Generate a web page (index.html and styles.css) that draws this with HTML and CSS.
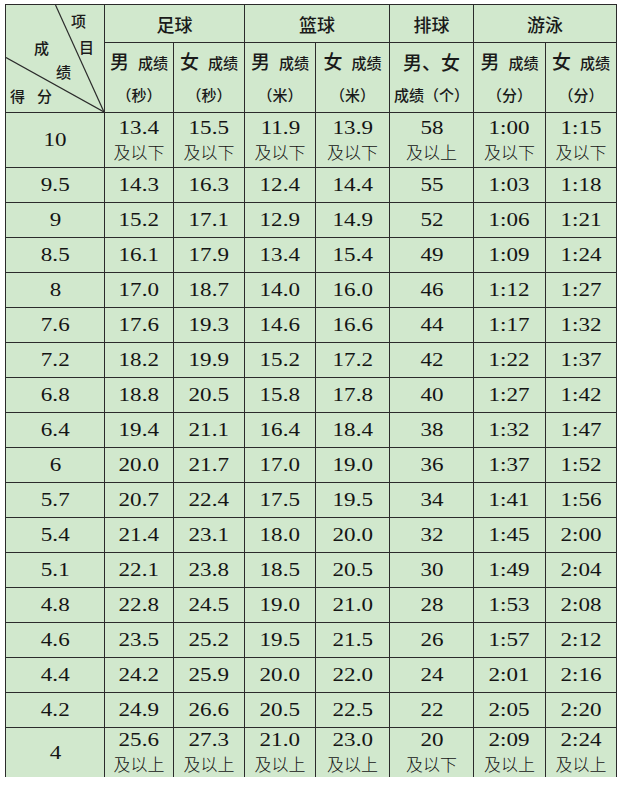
FILE: index.html
```html
<!DOCTYPE html>
<html lang="zh-CN">
<head>
<meta charset="utf-8">
<title>成绩评分表</title>
<link rel="stylesheet" href="styles.css">
</head>
<body>
<table class="score">
  <colgroup>
    <col class="c0"><col class="c1"><col class="c2"><col class="c3"><col class="c4"><col class="c5"><col class="c6"><col class="c7">
  </colgroup>
  <thead>
    <tr class="h1">
      <th rowspan="2" class="diag">
        <svg class="diag-lines" viewBox="0 0 99 108" preserveAspectRatio="none">
          <line x1="50" y1="0" x2="99" y2="108"/>
          <line x1="0" y1="53" x2="99" y2="108"/>
        </svg>
        <span class="dl l-xiang">项</span>
        <span class="dl l-mu">目</span>
        <span class="dl l-cheng">成</span>
        <span class="dl l-ji">绩</span>
        <span class="dl l-de">得</span>
        <span class="dl l-fen">分</span>
      </th>
      <th colspan="2" class="sport">足球</th>
      <th colspan="2" class="sport">篮球</th>
      <th class="sport">排球</th>
      <th colspan="2" class="sport">游泳</th>
    </tr>
    <tr class="h2">
      <th><span class="big">男</span><span class="sm">成绩</span><br><span class="unit">（秒）</span></th>
      <th><span class="big">女</span><span class="sm">成绩</span><br><span class="unit">（秒）</span></th>
      <th><span class="big">男</span><span class="sm">成绩</span><br><span class="unit">（米）</span></th>
      <th><span class="big">女</span><span class="sm">成绩</span><br><span class="unit">（米）</span></th>
      <th><span class="big">男、女</span><br><span class="unit"><span class="sm2">成绩</span>（个）</span></th>
      <th><span class="big">男</span><span class="sm">成绩</span><br><span class="unit">（分）</span></th>
      <th><span class="big">女</span><span class="sm">成绩</span><br><span class="unit">（分）</span></th>
    </tr>
  </thead>
  <tbody>
    <tr class="tall">
      <td><span class="n">10</span></td>
      <td><span class="n">13.4</span><br><span class="note">及以下</span></td>
      <td><span class="n">15.5</span><br><span class="note">及以下</span></td>
      <td><span class="n">11.9</span><br><span class="note">及以下</span></td>
      <td><span class="n">13.9</span><br><span class="note">及以下</span></td>
      <td><span class="n">58</span><br><span class="note">及以上</span></td>
      <td><span class="n">1:00</span><br><span class="note">及以下</span></td>
      <td><span class="n">1:15</span><br><span class="note">及以下</span></td>
    </tr>
    <tr><td><span class="n">9.5</span></td><td><span class="n">14.3</span></td><td><span class="n">16.3</span></td><td><span class="n">12.4</span></td><td><span class="n">14.4</span></td><td><span class="n">55</span></td><td><span class="n">1:03</span></td><td><span class="n">1:18</span></td></tr>
    <tr><td><span class="n">9</span></td><td><span class="n">15.2</span></td><td><span class="n">17.1</span></td><td><span class="n">12.9</span></td><td><span class="n">14.9</span></td><td><span class="n">52</span></td><td><span class="n">1:06</span></td><td><span class="n">1:21</span></td></tr>
    <tr><td><span class="n">8.5</span></td><td><span class="n">16.1</span></td><td><span class="n">17.9</span></td><td><span class="n">13.4</span></td><td><span class="n">15.4</span></td><td><span class="n">49</span></td><td><span class="n">1:09</span></td><td><span class="n">1:24</span></td></tr>
    <tr><td><span class="n">8</span></td><td><span class="n">17.0</span></td><td><span class="n">18.7</span></td><td><span class="n">14.0</span></td><td><span class="n">16.0</span></td><td><span class="n">46</span></td><td><span class="n">1:12</span></td><td><span class="n">1:27</span></td></tr>
    <tr><td><span class="n">7.6</span></td><td><span class="n">17.6</span></td><td><span class="n">19.3</span></td><td><span class="n">14.6</span></td><td><span class="n">16.6</span></td><td><span class="n">44</span></td><td><span class="n">1:17</span></td><td><span class="n">1:32</span></td></tr>
    <tr><td><span class="n">7.2</span></td><td><span class="n">18.2</span></td><td><span class="n">19.9</span></td><td><span class="n">15.2</span></td><td><span class="n">17.2</span></td><td><span class="n">42</span></td><td><span class="n">1:22</span></td><td><span class="n">1:37</span></td></tr>
    <tr><td><span class="n">6.8</span></td><td><span class="n">18.8</span></td><td><span class="n">20.5</span></td><td><span class="n">15.8</span></td><td><span class="n">17.8</span></td><td><span class="n">40</span></td><td><span class="n">1:27</span></td><td><span class="n">1:42</span></td></tr>
    <tr><td><span class="n">6.4</span></td><td><span class="n">19.4</span></td><td><span class="n">21.1</span></td><td><span class="n">16.4</span></td><td><span class="n">18.4</span></td><td><span class="n">38</span></td><td><span class="n">1:32</span></td><td><span class="n">1:47</span></td></tr>
    <tr><td><span class="n">6</span></td><td><span class="n">20.0</span></td><td><span class="n">21.7</span></td><td><span class="n">17.0</span></td><td><span class="n">19.0</span></td><td><span class="n">36</span></td><td><span class="n">1:37</span></td><td><span class="n">1:52</span></td></tr>
    <tr><td><span class="n">5.7</span></td><td><span class="n">20.7</span></td><td><span class="n">22.4</span></td><td><span class="n">17.5</span></td><td><span class="n">19.5</span></td><td><span class="n">34</span></td><td><span class="n">1:41</span></td><td><span class="n">1:56</span></td></tr>
    <tr><td><span class="n">5.4</span></td><td><span class="n">21.4</span></td><td><span class="n">23.1</span></td><td><span class="n">18.0</span></td><td><span class="n">20.0</span></td><td><span class="n">32</span></td><td><span class="n">1:45</span></td><td><span class="n">2:00</span></td></tr>
    <tr><td><span class="n">5.1</span></td><td><span class="n">22.1</span></td><td><span class="n">23.8</span></td><td><span class="n">18.5</span></td><td><span class="n">20.5</span></td><td><span class="n">30</span></td><td><span class="n">1:49</span></td><td><span class="n">2:04</span></td></tr>
    <tr><td><span class="n">4.8</span></td><td><span class="n">22.8</span></td><td><span class="n">24.5</span></td><td><span class="n">19.0</span></td><td><span class="n">21.0</span></td><td><span class="n">28</span></td><td><span class="n">1:53</span></td><td><span class="n">2:08</span></td></tr>
    <tr><td><span class="n">4.6</span></td><td><span class="n">23.5</span></td><td><span class="n">25.2</span></td><td><span class="n">19.5</span></td><td><span class="n">21.5</span></td><td><span class="n">26</span></td><td><span class="n">1:57</span></td><td><span class="n">2:12</span></td></tr>
    <tr><td><span class="n">4.4</span></td><td><span class="n">24.2</span></td><td><span class="n">25.9</span></td><td><span class="n">20.0</span></td><td><span class="n">22.0</span></td><td><span class="n">24</span></td><td><span class="n">2:01</span></td><td><span class="n">2:16</span></td></tr>
    <tr><td><span class="n">4.2</span></td><td><span class="n">24.9</span></td><td><span class="n">26.6</span></td><td><span class="n">20.5</span></td><td><span class="n">22.5</span></td><td><span class="n">22</span></td><td><span class="n">2:05</span></td><td><span class="n">2:20</span></td></tr>
    <tr class="last">
      <td><span class="n">4</span></td>
      <td><span class="n">25.6</span><br><span class="note">及以上</span></td>
      <td><span class="n">27.3</span><br><span class="note">及以上</span></td>
      <td><span class="n">21.0</span><br><span class="note">及以上</span></td>
      <td><span class="n">23.0</span><br><span class="note">及以上</span></td>
      <td><span class="n">20</span><br><span class="note">及以下</span></td>
      <td><span class="n">2:09</span><br><span class="note">及以上</span></td>
      <td><span class="n">2:24</span><br><span class="note">及以上</span></td>
    </tr>
  </tbody>
</table>
</body>
</html>
```

FILE: styles.css
```css
html, body {
  margin: 0;
  padding: 0;
  background: #ffffff;
}
body {
  padding: 4px 0 0 5px;
  height: 782px;
  overflow: hidden;
}
.score {
  border-collapse: collapse;
  table-layout: fixed;
  width: 611px;
  background: #d1e8cd;
  color: #141414;
  font-family: "Liberation Serif", "Noto Sans CJK SC", serif;
  font-size: 18px;
}
.c0 { width: 99px; }
.c1 { width: 69px; }
.c2 { width: 71px; }
.c3 { width: 71px; }
.c4 { width: 74px; }
.c5 { width: 84px; }
.c6 { width: 72px; }
.c7 { width: 71px; }

.score th,
.score td {
  border: 1px solid #2b2b2b;
  padding: 0;
  text-align: center;
  vertical-align: middle;
}
.score th {
  font-family: "Noto Sans CJK SC", sans-serif;
  font-weight: 500;
  color: #1a1a1a;
  white-space: nowrap;
}
.h1 { height: 38px; }
.h1 .sport {
  font-size: 18px;
}
.h2 { height: 70px; }
.h2 th {
  line-height: 31px;
  padding-top: 2px;
  padding-bottom: 2px;
}
.big { font-size: 19px; }
.sm {
  font-size: 15px;
  margin-left: 9px;
}
.sm2 { font-size: 15px; }
.unit { font-size: 15px; }

.diag {
  position: relative;
}
.diag-lines {
  position: absolute;
  left: 0;
  top: 0;
  width: 100%;
  height: 100%;
}
.diag-lines line {
  stroke: #2b2b2b;
  stroke-width: 1.2;
}
.dl {
  position: absolute;
  font-size: 15px;
  line-height: 16px;
}
.l-xiang { left: 65px; top: 8px; }
.l-mu { left: 73px; top: 34px; }
.l-cheng { left: 28px; top: 35px; }
.l-ji { left: 50px; top: 59px; }
.l-de { left: 4px; top: 83px; }
.l-fen { left: 31px; top: 83px; }

.n {
  display: inline-block;
  transform: scaleX(1.28);
}
.score tbody tr { height: 35px; }
.score tbody tr.tall { height: 55px; }
.score tbody tr.tall td,
.score tbody tr.last td {
  line-height: 24px;
}
.note {
  font-family: "Noto Sans CJK SC", sans-serif;
  font-size: 17px;
  font-weight: 300;
}
.score tbody tr.last { height: 49px; }
.score tbody tr.last td {
  border-bottom: none;
}
```
